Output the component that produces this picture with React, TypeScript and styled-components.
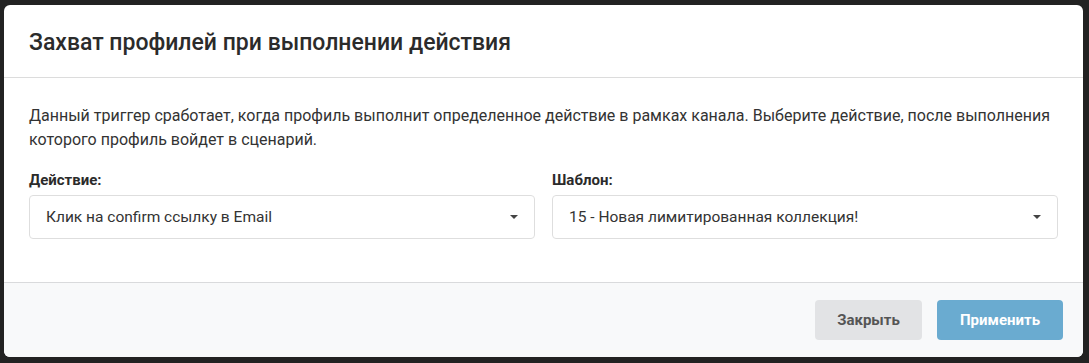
import React from 'react';
import styled, { createGlobalStyle } from 'styled-components';

const Global = createGlobalStyle`
  html, body { margin: 0; height: 100%; }
  body {
    background: #222222;
    font-family: Roboto, "Liberation Sans", sans-serif;
    color: #333;
  }
`;

const Backdrop = styled.div`
  min-height: 363px;
  box-sizing: border-box;
  padding: 5px 6px 6px 4px;
`;

const Modal = styled.div`
  background: #fff;
  border-radius: 6px;
  overflow: hidden;
  display: flex;
  flex-direction: column;
`;

const Header = styled.div`
  height: 72px;
  display: flex;
  align-items: center;
  padding: 0 25px;
  border-bottom: 1px solid #dcdcdc;
`;

const Title = styled.h2`
  margin: 0;
  font-size: 23px;
  font-weight: 500;
  color: #2b2b2b;
  padding-top: 2px;
`;

const Body = styled.div`
  padding: 26px 25px 43px;
`;

const Text = styled.p`
  margin: 0 0 18px;
  font-size: 16px;
  line-height: 24px;
  color: #333;
`;

const Fields = styled.div`
  display: grid;
  grid-template-columns: 1fr 1fr;
  column-gap: 17px;
`;

const Field = styled.div`
  display: flex;
  flex-direction: column;
`;

const Label = styled.label`
  font-size: 15px;
  font-weight: 700;
  line-height: 20px;
  color: #2b2b2b;
  margin-bottom: 5px;
`;

const Select = styled.div`
  height: 44px;
  box-sizing: border-box;
  border: 1px solid #dedede;
  border-radius: 4px;
  display: flex;
  align-items: center;
  justify-content: space-between;
  padding: 0 16px;
  font-size: 15.5px;
  color: #333;
`;

const Caret = styled.span`
  width: 0;
  height: 0;
  border-left: 4.5px solid transparent;
  border-right: 4.5px solid transparent;
  border-top: 4.5px solid #444;
`;

const Footer = styled.div`
  background: #f8f9fa;
  border-top: 1px solid #d9dadc;
  height: 74px;
  display: flex;
  align-items: center;
  justify-content: flex-end;
  gap: 15px;
  padding: 0 20px;
`;

const Button = styled.button<{ $primary?: boolean }>`
  height: 40px;
  border: none;
  border-radius: 4px;
  font-family: Roboto, "Liberation Sans", sans-serif;
  font-size: 15px;
  font-weight: 700;
  padding: 0;
  width: ${({ $primary }) => ($primary ? '126px' : '107px')};
  background: ${({ $primary }) => ($primary ? '#6aabd0' : '#e2e3e5')};
  color: ${({ $primary }) => ($primary ? '#fff' : '#555')};
  cursor: pointer;
`;

const SelectField = ({ label, value }: { label: string; value: string }) => (
  <Field>
    <Label>{label}</Label>
    <Select>
      <span>{value}</span>
      <Caret />
    </Select>
  </Field>
);

export default function App() {
  return (
    <Backdrop>
      <Global />
      <Modal>
        <Header>
          <Title>Захват профилей при выполнении действия</Title>
        </Header>
        <Body>
          <Text>
            Данный триггер сработает, когда профиль выполнит определенное действие в рамках канала. Выберите действие, после выполнения которого профиль войдет в сценарий.
          </Text>
          <Fields>
            <SelectField label="Действие:" value="Клик на confirm ссылку в Email" />
            <SelectField label="Шаблон:" value="15 - Новая лимитированная коллекция!" />
          </Fields>
        </Body>
        <Footer>
          <Button>Закрыть</Button>
          <Button $primary>Применить</Button>
        </Footer>
      </Modal>
    </Backdrop>
  );
}
